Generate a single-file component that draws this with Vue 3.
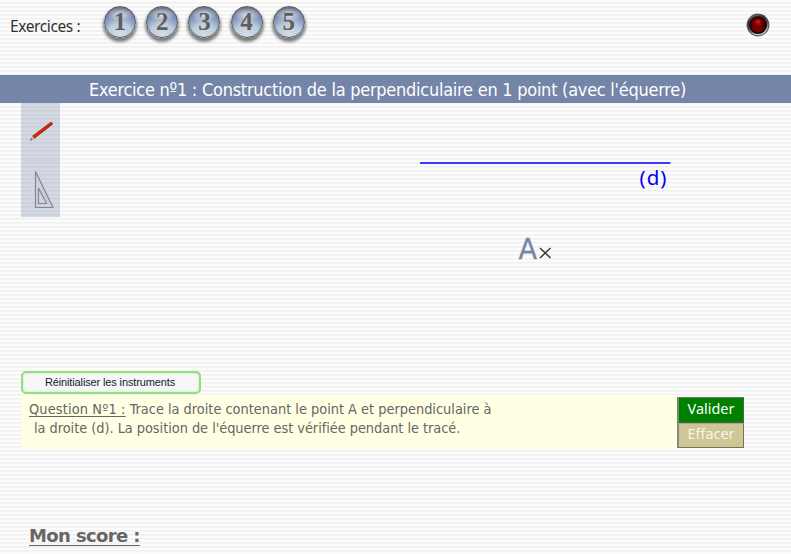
<script setup>
const exercises = [1, 2, 3, 4, 5]
</script>

<template>
  <main class="page">
    <header class="top">
      <span class="label">Exercices :</span>
      <nav class="balls">
        <button v-for="n in exercises" :key="n" class="ball">{{ n }}</button>
      </nav>
      <svg class="led" width="24" height="24" viewBox="0 0 24 24">
        <defs>
          <linearGradient id="rim" x1="0" y1="0" x2="0.4" y2="1">
            <stop offset="0" stop-color="#777" />
            <stop offset="0.35" stop-color="#333" />
            <stop offset="0.65" stop-color="#555" />
            <stop offset="1" stop-color="#bbb" />
          </linearGradient>
          <radialGradient id="lamp" cx="0.5" cy="0.4" r="0.6">
            <stop offset="0" stop-color="#b00a0a" />
            <stop offset="0.45" stop-color="#6c0000" />
            <stop offset="1" stop-color="#160000" />
          </radialGradient>
        </defs>
        <circle cx="12" cy="12" r="11.4" fill="#4d5151" />
        <circle cx="12" cy="12" r="9.8" fill="none" stroke="url(#rim)" stroke-width="1.6" />
        <circle cx="12" cy="12" r="8.8" fill="#100" />
        <circle cx="12" cy="12" r="7.9" fill="url(#lamp)" />
        <path d="M5 13.7Q12 16 19 13.7Q17.5 19 12 19.2Q6.5 19 5 13.7Z" fill="#860000" opacity="0.75" />
        <ellipse cx="12" cy="8.5" rx="2.5" ry="2" fill="#e02c2c" opacity="0.5" />
      </svg>
    </header>

    <h1 class="title"><span>Exercice nº1 : Construction de la perpendiculaire en 1 point (avec l'équerre)</span></h1>

    <section class="work">
      <aside class="tools">
        <svg width="39" height="57" viewBox="0 0 39 57">
          <path d="M9.5 37.5L12 32.5L14.5 35Z" fill="#e2b08f" stroke="#b78972" stroke-width="0.6" />
          <path d="M12.5 34.2L31 20" stroke="#7f2a20" stroke-width="3.4" />
          <path d="M12.5 33.8L31 19.6" stroke="#dc2600" stroke-width="2.3" />
          <path d="M9.5 37.5L10.5 35.5" stroke="#555" />
        </svg>
        <svg width="39" height="57" viewBox="0 0 39 57">
          <path d="M14.5 11.5V47.5H32Z M17.5 28V43.5H25.5Z" fill="#cdd0e8" fill-rule="evenodd" stroke="#86868f" stroke-width="1.2" />
          <path d="M20 27L28 43" stroke="#c69fb5" stroke-width="1" stroke-dasharray="1 1.5" />
        </svg>
      </aside>
      <svg class="figure" width="731" height="260" viewBox="60 103 731 260">
        <path d="M420 163H670.5" stroke="#3c3cff" stroke-width="2" />
        <text x="639.5" y="185" textLength="27" class="line-name">(d)</text>
        <text x="518.5" y="259" textLength="18.5" lengthAdjust="spacingAndGlyphs" class="point-name">A</text>
        <path d="M540 248L550.5 258M550.5 248L540 258" stroke="#333" stroke-width="1.4" />
      </svg>
    </section>

    <button class="reset"><span>Réinitialiser les instruments</span></button>

    <section class="question">
      <p class="text">
        <span class="q1"><u>Question Nº1 :</u> Trace la droite contenant le point A et perpendiculaire à</span>
        <span class="q2">la droite (d). La position de l'équerre est vérifiée pendant le tracé.</span>
      </p>
      <div class="actions">
        <button class="action ok"><span>Valider</span></button>
        <button class="action clear"><span>Effacer</span></button>
      </div>
    </section>

    <footer class="score"><span>Mon score :</span></footer>
  </main>
</template>

<style>
body {
  margin: 0;
  overflow: hidden;
}
</style>

<style scoped>
.page {
  width: 791px;
  height: 554px;
  overflow: hidden;
  display: flex;
  flex-direction: column;
  font-family: "DejaVu Sans Condensed", "DejaVu Sans", sans-serif;
  font-stretch: condensed;
  background: repeating-linear-gradient(#fcfcfc 0 2px, #f1f1f1 2px 3px, #f5f5f5 3px 4px);
}
button {
  font: inherit;
  margin: 0;
  padding: 0;
}
.top {
  height: 75px;
  flex: none;
  display: flex;
  align-items: flex-start;
}
.label {
  width: 94px;
  padding: 16px 0 0 10px;
  font: 15.5px/20px "Noto Sans", sans-serif;
  letter-spacing: -0.4px;
  color: #333;
  white-space: nowrap;
}
.balls {
  display: flex;
  gap: 10.2px;
  padding-top: 6px;
}
.ball {
  box-sizing: border-box;
  width: 32px;
  height: 32px;
  border: 1px solid #565b64;
  border-radius: 50%;
  background:
    radial-gradient(ellipse 13px 7px at 50% 27%, #dfe1e8 0%, rgba(200, 204, 215, 0.5) 60%, transparent 100%),
    radial-gradient(circle at 50% 95%, #d3dde6 0%, #bdcbdb 38%, #7b91b7 66%, #6c707a 92%);
  box-shadow: 0 3px 3px 1px rgba(60, 60, 60, 0.65);
  color: #5e5e5e;
  font: bold 25px/30px "Liberation Serif", serif;
  text-align: center;
}
.led {
  margin: 13px 21px 0 auto;
}
.title {
  height: 28px;
  flex: none;
  margin: 0;
  padding-left: 89px;
  background: #7585a8;
  color: #fff;
  font-size: 18px;
  font-weight: normal;
  line-height: 29px;
  letter-spacing: -0.26px;
  white-space: nowrap;
}
.work {
  display: flex;
  height: 268px;
  flex: none;
  padding-left: 21px;
}
.tools {
  width: 39px;
  height: 114px;
  display: flex;
  flex-direction: column;
  background: rgba(117, 133, 168, 0.3);
}
.tools svg + svg {
  box-shadow: inset 0 1px rgba(117, 133, 168, 0.08);
}
.line-name {
  font-family: "Noto Sans", sans-serif;
  font-size: 20.5px;
  fill: #0000f5;
}
.point-name {
  font-size: 29px;
  fill: #7585a8;
  stroke: #7585a8;
  stroke-width: 0.3px;
}
.reset {
  box-sizing: border-box;
  align-self: flex-start;
  flex: none;
  width: 180px;
  height: 23px;
  margin-left: 21px;
  padding-right: 2px;
  border: 2px solid #93df7d;
  border-radius: 5px;
  background: #f7f7f7;
  box-shadow: inset 0 0 2px #a4e690;
  color: #123;
  font: 11px/17px "Liberation Sans", sans-serif;
  letter-spacing: -0.13px;
  text-align: center;
}
.reset span {
  display: block;
}
.question {
  height: 54px;
  width: 723px;
  flex: none;
  margin: 1px 0 0 21px;
  display: flex;
  justify-content: space-between;
  background: linear-gradient(90deg, #ffffe3 656px, transparent 656px);
}
.text {
  margin: 0;
  padding: 5px 0 0 8px;
  color: #666;
  font-size: 14.4px;
  line-height: 19px;
  white-space: nowrap;
}
.text span {
  display: block;
}
.text u {
  text-underline-offset: 2px;
  letter-spacing: 0.15px;
}
.q2 {
  padding-left: 5px;
  letter-spacing: -0.03px;
}
.actions {
  width: 67px;
  padding-top: 2px;
  display: flex;
  flex-direction: column;
}
.action {
  box-sizing: border-box;
  height: 26px;
  border: 1px solid #777;
  border-left: 2px solid #888;
  color: #fff;
  font: 14.4px/20px "Noto Sans", sans-serif;
}
.action span {
  display: block;
  padding-bottom: 3px;
}
.ok {
  background: #008000;
  border-color: #647e64 #456b45 #456b45 #6e8a6e;
}
.clear {
  height: 25px;
  background: #cec694;
  border-color: #aaa58b #77735b #77735b #888;
  color: #f7f5e7;
}
.score {
  padding: 76px 0 0 29px;
  color: #666;
  font: bold 18px/22px "DejaVu Sans", sans-serif;
  letter-spacing: -0.62px;
  text-decoration: underline;
  text-decoration-thickness: 1px;
  text-underline-offset: 3px;
  white-space: nowrap;
}
</style>
